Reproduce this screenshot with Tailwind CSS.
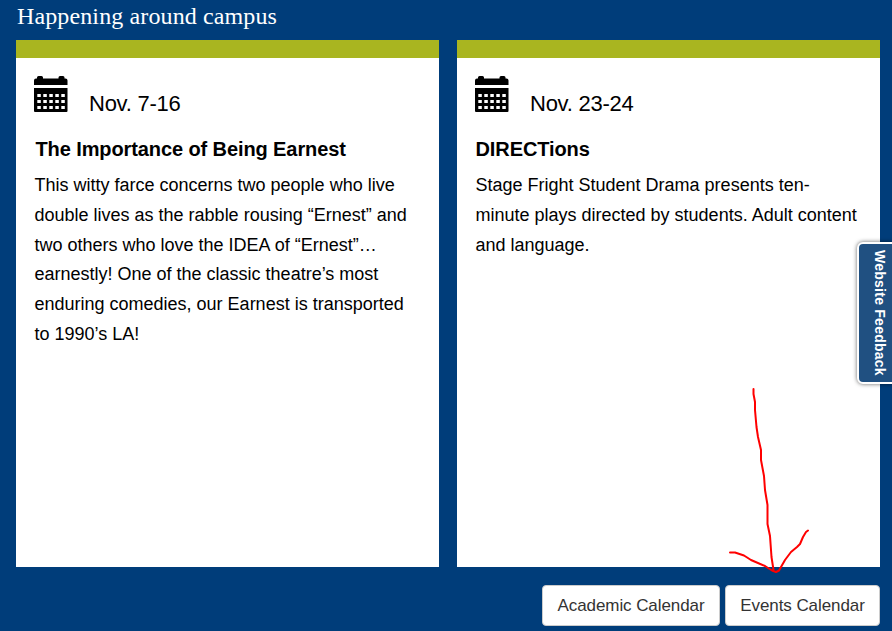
<!DOCTYPE html>
<html lang="en">
<head>
<meta charset="utf-8">
<title>Happening around campus</title>
<script src="https://cdn.jsdelivr.net/npm/@tailwindcss/browser@4"></script>
</head>
<body class="relative h-[631px] w-[892px] overflow-hidden bg-[#003d7a] font-['Liberation_Sans',Arial,sans-serif] text-black">
<svg class="hidden">
  <symbol id="calendar" viewBox="0 0 34 36">
    <path fill-rule="evenodd" d="M0 9V4.500Q0 2.500 2 2.500H3V1.500Q3 0 4.500 0H7.500Q9 0 9 1.500V2.500H24.500V1.500Q24.500 0 26 0H29Q30.500 0 30.500 1.500V2.500H31.500Q33.500 2.500 33.500 4.500V9ZM0 12H33.500V35Q33.500 36 32.500 36H1Q0 36 0 35ZM3.300 18v3h3.500v-3zm6 0v3h3.500v-3zm6 0v3h3.500v-3zm6 0v3h3.500v-3zm6 0v3h3.500v-3zM3.300 24v3h3.500v-3zm6 0v3h3.500v-3zm6 0v3h3.500v-3zm6 0v3h3.500v-3zm6 0v3h3.500v-3zM3.300 30v3h3.500v-3zm6 0v3h3.500v-3zm6 0v3h3.500v-3zm6 0v3h3.500v-3zm6 0v3h3.500v-3z"/>
  </symbol>
</svg>
<main class="flex h-full flex-col pl-4 pr-3">
  <h1 class="h-10 pt-[2px] pl-px whitespace-nowrap font-[Georgia,'Liberation_Serif',serif] text-[24px] leading-[28px] tracking-[0.12px] text-white">Happening around campus</h1>
  <div class="grid h-[527px] grid-cols-2 gap-[18px]">
    <article class="border-t-[18px] border-[#a9b520] bg-white px-[18px] pt-[18px]">
      <div class="flex h-9 items-start gap-[21px]">
        <svg class="h-9 w-[34px]"><use href="#calendar"/></svg>
        <span class="pt-[15px] text-[22px] leading-[26px] tracking-[-0.25px]">Nov. 7-16</span>
      </div>
      <h2 class="mt-[25px] pl-[1.5px] text-[20px] leading-6 font-bold tracking-[-0.1px]">The Importance of Being Earnest</h2>
      <p class="mt-[10px] pl-[0.5px] text-[18px] leading-[29.8px] whitespace-nowrap">This witty farce concerns two people who live<br>double lives as the rabble rousing “Ernest” and<br>two others who love the IDEA of “Ernest”…<br>earnestly! One of the classic theatre’s most<br>enduring comedies, our Earnest is transported<br>to 1990’s LA!</p>
    </article>
    <article class="border-t-[18px] border-[#a9b520] bg-white px-[18px] pt-[18px]">
      <div class="flex h-9 items-start gap-[21px]">
        <svg class="h-9 w-[34px]"><use href="#calendar"/></svg>
        <span class="pt-[15px] text-[22px] leading-[26px] tracking-[-0.25px]">Nov. 23-24</span>
      </div>
      <h2 class="mt-[25px] pl-[0.5px] text-[20px] leading-6 font-bold tracking-[-0.1px]">DIRECTions</h2>
      <p class="mt-[10px] pl-[0.5px] text-[18px] leading-[29.8px] whitespace-nowrap">Stage Fright Student Drama presents ten-<br>minute plays directed by students. Adult content<br>and language.</p>
    </article>
  </div>
  <div class="mt-[18px] flex justify-end gap-[5px] text-[17px] tracking-[-0.08px] text-[#333]">
    <button class="h-[41px] w-[178px] rounded-[4px] border border-[#ccc] bg-white whitespace-nowrap">Academic Calendar</button>
    <button class="h-[41px] w-[155px] rounded-[4px] border border-[#ccc] bg-white whitespace-nowrap">Events Calendar</button>
  </div>
</main>
<div class="absolute top-[242px] left-[857px] flex h-[142px] w-[40px] items-center justify-center rounded-[6px] border-2 border-white bg-[#205081] pl-[5px] shadow-[0_0_4px_rgba(0,0,0,0.6)]">
  <span class="whitespace-nowrap text-[14px] leading-4 font-bold tracking-[0.25px] text-white [writing-mode:vertical-rl]">Website Feedback</span>
</div>
<svg class="absolute top-0 left-0 h-[631px] w-[892px]" fill="none" stroke="#f00" stroke-width="2" stroke-linecap="round" stroke-linejoin="round">
  <path d="M753.500 389V394L755 402V410L756.500 427L758 437L761 450V460L764 476L765 490L767.500 505V524L770 536L771.500 557L773.500 570M730 552.500H735L744 555.500L751 560L765 566L772 570.500L776 572L779 570.500L785 560L791 552L797 547L800 544L803 537L806 532L808 530.500"/>
</svg>
</body>
</html>
